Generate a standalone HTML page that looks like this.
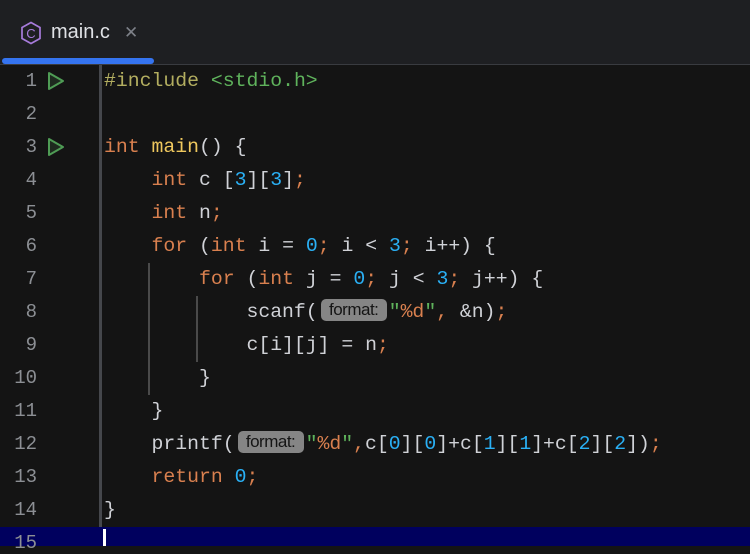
<!DOCTYPE html>
<html><head><style>
body{margin:0;width:750px;height:546px;overflow:hidden;background:#141414;position:relative;font-family:"Liberation Mono",monospace}
.tabbar{position:absolute;left:0;top:0;width:750px;height:64px;background:#1e1f22;border-bottom:1px solid #393b40}
.tabname{position:absolute;left:51px;top:21px;font:20px "Liberation Sans",sans-serif;color:#dfe1e5}
.close{position:absolute;left:124px;top:23px;font:17px "Liberation Sans",sans-serif;color:#7d8088}
.ul{position:absolute;left:2px;top:58px;width:152px;height:6px;background:#3574f0;border-radius:3px}
.sep{position:absolute;left:99px;top:65px;width:3px;height:481px;background:#45474c}
.cur{position:absolute;left:0;top:527px;width:750px;height:19px;background:#00005e}
.caret{position:absolute;left:103px;top:529px;width:3px;height:17px;background:#fff}
.ln{position:absolute;width:37px;text-align:right;left:0;font-size:19px;color:#8c8f94;font-family:"Liberation Mono",monospace;line-height:22px}
.l{position:absolute;left:104px;font-size:19.8px;color:#d0d2d7;white-space:pre;height:33px;line-height:33px}
.k{color:#d9804f}.n{color:#2ab0f5}.s{color:#5fb35c}.f{color:#efc85e}.p{color:#b3ae60}.o{color:#d9804f}
.h{display:inline-block;background:#858585;color:#151515;font:17px "Liberation Sans",sans-serif;border-radius:5px;height:22px;line-height:22px;vertical-align:middle;margin:0 2px 0 3px;width:66px;text-align:center;position:relative;top:-2px;letter-spacing:-0.5px}
.g{position:absolute;width:2px;background:#4a4a4a}
.run{position:absolute;left:46px}
</style></head><body>
<div class="tabbar">
<svg style="position:absolute;left:20px;top:21px" width="22" height="24" viewBox="0 0 22 24"><polygon points="11,1.5 20,6.5 20,17.5 11,22.5 2,17.5 2,6.5" fill="none" stroke="#a77bdb" stroke-width="1.7"/><text x="11" y="17" font-family="Liberation Sans" font-size="13" fill="#a77bdb" text-anchor="middle">C</text></svg>
<div class="tabname">main.c</div><div class="close">✕</div>
<div class="ul"></div></div>
<div class="sep"></div>
<div class="cur"></div><div class="caret"></div>
<div class="g" style="left:148px;top:263px;height:132px"></div>
<div class="g" style="left:196px;top:296px;height:66px"></div>
<svg class="run" style="top:71px" width="20" height="20"><polygon points="3,2 17,10 3,18" fill="#1e2a1f" stroke="#4f9c55" stroke-width="2" stroke-linejoin="round"/></svg>
<svg class="run" style="top:137px" width="20" height="20"><polygon points="3,2 17,10 3,18" fill="#1e2a1f" stroke="#4f9c55" stroke-width="2" stroke-linejoin="round"/></svg>
<div class="ln" style="top:70px">1</div>
<div class="ln" style="top:103px">2</div>
<div class="ln" style="top:136px">3</div>
<div class="ln" style="top:169px">4</div>
<div class="ln" style="top:202px">5</div>
<div class="ln" style="top:235px">6</div>
<div class="ln" style="top:268px">7</div>
<div class="ln" style="top:301px">8</div>
<div class="ln" style="top:334px">9</div>
<div class="ln" style="top:367px">10</div>
<div class="ln" style="top:400px">11</div>
<div class="ln" style="top:433px">12</div>
<div class="ln" style="top:466px">13</div>
<div class="ln" style="top:499px">14</div>
<div class="ln" style="top:532px">15</div>
<div class="l" style="top:65px"><span class="p">#include</span> <span class="s">&lt;stdio.h&gt;</span></div>
<div class="l" style="top:131px"><span class="k">int</span> <span class="f">main</span>() {</div>
<div class="l" style="top:164px">    <span class="k">int</span> c [<span class="n">3</span>][<span class="n">3</span>]<span class="o">;</span></div>
<div class="l" style="top:197px">    <span class="k">int</span> n<span class="o">;</span></div>
<div class="l" style="top:230px">    <span class="k">for</span> (<span class="k">int</span> i = <span class="n">0</span><span class="o">;</span> i &lt; <span class="n">3</span><span class="o">;</span> i++) {</div>
<div class="l" style="top:263px">        <span class="k">for</span> (<span class="k">int</span> j = <span class="n">0</span><span class="o">;</span> j &lt; <span class="n">3</span><span class="o">;</span> j++) {</div>
<div class="l" style="top:296px">            scanf(<span class="h">format:</span><span class="s">"<span class="o">%d</span>"</span><span class="o">,</span> &amp;n)<span class="o">;</span></div>
<div class="l" style="top:329px">            c[i][j] = n<span class="o">;</span></div>
<div class="l" style="top:362px">        }</div>
<div class="l" style="top:395px">    }</div>
<div class="l" style="top:428px">    printf(<span class="h">format:</span><span class="s">"<span class="o">%d</span>"</span><span class="o">,</span>c[<span class="n">0</span>][<span class="n">0</span>]+c[<span class="n">1</span>][<span class="n">1</span>]+c[<span class="n">2</span>][<span class="n">2</span>])<span class="o">;</span></div>
<div class="l" style="top:461px">    <span class="k">return</span> <span class="n">0</span><span class="o">;</span></div>
<div class="l" style="top:494px">}</div>
</body></html>
